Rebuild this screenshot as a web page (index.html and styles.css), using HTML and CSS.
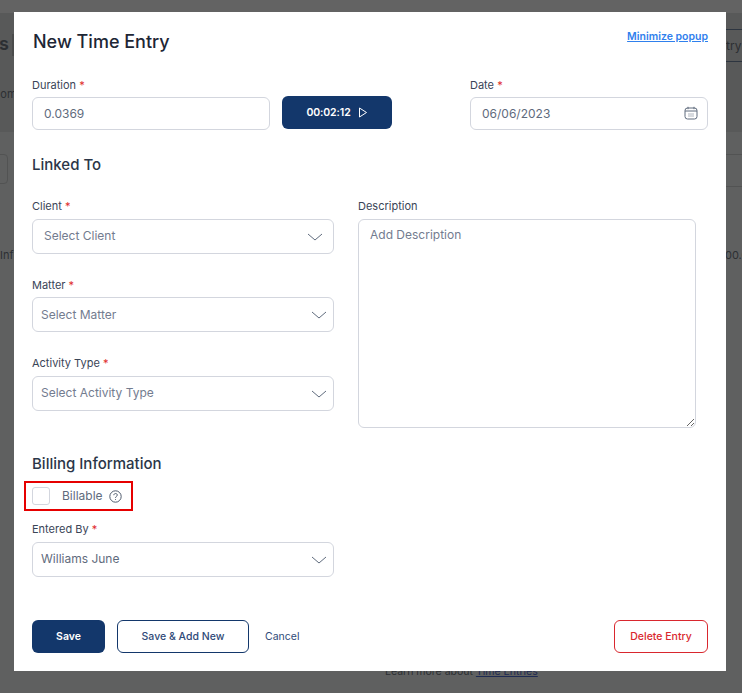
FILE: index.html
```html
<!DOCTYPE html>
<html lang="en">
<head>
    <meta charset="UTF-8">
    <meta name="viewport" content="width=device-width, initial-scale=1.0">
    <title>New Time Entry</title>
    <link rel="stylesheet" href="styles.css">
</head>
<body>
    <!-- page behind the popup, dimmed -->
    <div class="behind">
        <span class="behind-top"></span>
        <span class="behind-band"></span>
        <span class="behind-title">s</span>
        <span class="behind-bar"></span>
        <span class="behind-com">com</span>
        <span class="behind-inf">Inf</span>
        <span class="behind-num">00.0</span>
        <span class="behind-btn">try</span>
        <span class="behind-rule behind-rule-a"></span>
        <span class="behind-rule behind-rule-b"></span>
        <span class="behind-box"></span>
        <span class="behind-learn">Learn more about <u>Time Entries</u></span>
    </div>

    <div class="modal">
        <div class="modal-head">
            <h1>New Time Entry</h1>
            <a class="minimize" href="#">Minimize popup</a>
        </div>

        <div class="duration-row">
            <div class="field duration-field">
                <label>Duration <span class="req">*</span></label>
                <input type="text" class="input" value="0.0369">
            </div>
            <button class="timer">
                00:02:12
                <svg width="10" height="11" viewBox="0 0 10 11" fill="none" stroke="#fff" stroke-width="1"><path d="M1.5 1v9l7-4.500z"/></svg>
            </button>
            <div class="field date-field">
                <label>Date <span class="req">*</span></label>
                <div class="date-input">
                    <input type="text" class="input" value="06/06/2023">
                    <svg class="cal" width="14" height="14" viewBox="0 0 14 14" fill="none" stroke="#5f6b7d" stroke-width="1"><rect x="1" y="2" width="12" height="11" rx="2.500"/><path d="M1 5h12M4 .8v2.400M10 .8v2.400"/><path d="M4.500 8h1M6.500 8h1M8.500 8h1M4.500 10h1M6.500 10h1M8.500 10h1"/></svg>
                </div>
            </div>
        </div>

        <h2 class="linked-title">Linked To</h2>

        <div class="linked">
            <div class="linked-left">
                <div class="field">
                    <label>Client <span class="req">*</span></label>
                    <div class="select select-client">
                        <span class="placeholder">Select Client</span>
                        <svg width="16" height="8" viewBox="0 0 16 8" fill="none" stroke="#5f6b7d" stroke-width="1"><path d="M1 1l7 6 7-6"/></svg>
                    </div>
                </div>
                <div class="field field-matter">
                    <label>Matter <span class="req">*</span></label>
                    <div class="select">
                        <span class="placeholder">Select Matter</span>
                        <svg width="16" height="8" viewBox="0 0 16 8" fill="none" stroke="#5f6b7d" stroke-width="1"><path d="M1 1l7 6 7-6"/></svg>
                    </div>
                </div>
                <div class="field field-activity">
                    <label>Activity Type <span class="req">*</span></label>
                    <div class="select">
                        <span class="placeholder">Select Activity Type</span>
                        <svg width="16" height="8" viewBox="0 0 16 8" fill="none" stroke="#5f6b7d" stroke-width="1"><path d="M1 1l7 6 7-6"/></svg>
                    </div>
                </div>
            </div>
            <div class="field desc-field">
                <label>Description</label>
                <textarea class="desc" placeholder="Add Description"></textarea>
            </div>
        </div>

        <h2 class="billing-title">Billing Information</h2>
        <div class="billable">
            <span class="check"></span>
            <span class="billable-text">Billable</span>
            <svg width="13" height="13" viewBox="0 0 13 13" fill="none" stroke="#4f5b6d" stroke-width="1"><circle cx="6.500" cy="6.500" r="5.700"/><path d="M4.800 5.200c0-2.200 3.500-2.200 3.500-.1 0 1.300-1.800 1.300-1.800 2.700M6.500 9.200v.8"/></svg>
        </div>

        <div class="field field-entered">
            <label>Entered By <span class="req">*</span></label>
            <div class="select">
                <span class="value">Williams June</span>
                <svg width="16" height="8" viewBox="0 0 16 8" fill="none" stroke="#5f6b7d" stroke-width="1"><path d="M1 1l7 6 7-6"/></svg>
            </div>
        </div>

        <div class="footer">
            <button class="btn btn-save">Save</button>
            <button class="btn btn-add">Save &amp; Add New</button>
            <button class="btn btn-cancel">Cancel</button>
            <button class="btn btn-delete">Delete Entry</button>
        </div>
    </div>
</body>
</html>
```

FILE: styles.css
```css
* {
    box-sizing: border-box;
}
html, body {
    height: 100%;
}
body {
    margin: 0;
    overflow: hidden;
    background-color: #5f6060;
    font-family: Inter, "Liberation Sans", sans-serif;
    color: #2b3648;
    position: relative;
}

/* dimmed page */
.behind {
    position: absolute;
    inset: 0;
    color: #2c2f33;
    font-size: 11px;
}
.behind span {
    position: absolute;
}
.behind .behind-top {
    left: 0;
    top: 0;
    width: 742px;
    height: 13px;
    background-color: #636363;
}
.behind .behind-band {
    left: 0;
    top: 13px;
    width: 742px;
    height: 119px;
    background-color: #585959;
}
.behind-title {
    left: -1px;
    top: 33px;
    font-size: 18px;
    font-weight: 600;
}
.behind-bar {
    left: 12px;
    top: 34px;
    width: 2px;
    height: 22px;
    background-color: #4a4b4b;
}
.behind-com {
    left: -6px;
    top: 87px;
}
.behind-inf {
    left: 0;
    top: 248px;
}
.behind-num {
    left: 725px;
    top: 248px;
}
.behind-btn {
    left: 726px;
    top: 29px;
    width: 30px;
    height: 33px;
    padding-top: 8px;
    font-size: 12px;
    border-top: 1px solid #2d3540;
    border-bottom: 1px solid #2d3540;
}
.behind-rule {
    left: 726px;
    width: 16px;
    height: 1px;
    background-color: #525353;
}
.behind-rule-a {
    top: 154px;
}
.behind-rule-b {
    top: 186px;
}
.behind-box {
    left: -6px;
    top: 154px;
    width: 14px;
    height: 30px;
    border: 1px solid #525353;
    border-radius: 4px;
}
.behind-learn {
    left: 385px;
    top: 665px;
    font-size: 10.500px;
}
.behind-learn u {
    color: #1e2a52;
}

/* popup */
.modal {
    position: absolute;
    left: 14px;
    top: 12px;
    width: 712px;
    height: 659px;
    background-color: #fff;
    padding: 18px 18px 0 18px;
}
.modal-head {
    display: flex;
    justify-content: space-between;
    align-items: flex-start;
    height: 45px;
}
h1 {
    margin: 0 0 0 1px;
    font-size: 18px;
    line-height: 24px;
    font-weight: 500;
    color: #1d2635;
}
.minimize {
    font-size: 10.500px;
    line-height: 14px;
    font-weight: 600;
    color: #2f80ed;
}
h2 {
    margin: 0;
    font-size: 15px;
    line-height: 18px;
    font-weight: 500;
    color: #2b3648;
}
label {
    display: block;
    font-size: 11px;
    line-height: 14px;
    font-weight: 400;
    color: #3a4557;
}
.req {
    color: #e02b2b;
}
.input {
    display: block;
    width: 100%;
    height: 33px;
    margin-top: 5px;
    padding: 0 11px;
    border: 1px solid #d3d6de;
    border-radius: 6px;
    font-family: inherit;
    font-size: 12px;
    color: #5f6b7d;
    outline: none;
}

.duration-row {
    display: flex;
    align-items: flex-start;
    height: 78px;
    margin-top: 3px;
}
.duration-field {
    width: 238px;
    flex: none;
}
.timer {
    flex: none;
    display: flex;
    align-items: center;
    justify-content: center;
    gap: 7px;
    width: 110px;
    height: 33px;
    margin: 18px 0 0 12px;
    padding: 0;
    border: none;
    border-radius: 6px;
    background-color: #13376b;
    color: #fff;
    font-family: inherit;
    font-size: 10.500px;
    letter-spacing: -0.1px;
    font-weight: 600;
}
.date-field {
    flex: none;
    width: 238px;
    margin-left: 78px;
}
.date-input {
    position: relative;
}
.cal {
    position: absolute;
    right: 10px;
    top: 9px;
}

.linked {
    display: flex;
    margin-top: 25px;
}
.linked-left {
    width: 302px;
    flex: none;
}
.select {
    display: flex;
    align-items: center;
    justify-content: space-between;
    height: 35px;
    margin-top: 5px;
    padding: 0 6px 0 8px;
    border: 1px solid #d3d6de;
    border-radius: 6px;
    font-size: 12px;
}
.select span {
    margin-bottom: 2px;
}
.select-client {
    margin-top: 6px;
    padding: 0 10px 0 11px;
}
.placeholder {
    color: #737c8f;
}
.value {
    color: #5f6b7d;
}
.field-matter {
    margin-top: 24px;
}
.field-matter .select span {
    margin-bottom: 0;
}
.field-activity {
    margin-top: 24px;
}
.field-activity .select {
    margin-top: 6px;
}
.desc-field {
    width: 338px;
    margin-left: 24px;
}
.desc {
    display: block;
    width: 100%;
    height: 209px;
    margin-top: 6px;
    padding: 7px 11px;
    border: 1px solid #d3d6de;
    border-radius: 6px;
    font-family: inherit;
    font-size: 12px;
    outline: none;
}
.desc::placeholder {
    color: #737c8f;
}

.billing-title {
    margin-top: 27px;
}
.billable {
    display: flex;
    align-items: center;
    width: 109px;
    height: 30px;
    margin: 8px 0 0 -8px;
    padding-left: 6px;
    border: 2px solid #e60000;
    font-size: 12px;
    color: #5f6b7d;
}
.check {
    width: 18px;
    height: 18px;
    border: 1px solid #d3d6de;
    border-radius: 3px;
}
.billable-text {
    margin: 0 6px 2px 12px;
}
.field-entered {
    margin-top: 11px;
    width: 302px;
}
.field-entered .select {
    margin-top: 6px;
}

.footer {
    display: flex;
    align-items: center;
    margin-top: 43px;
}
.btn {
    height: 33px;
    padding: 0;
    border-radius: 6px;
    border: 1px solid transparent;
    background: none;
    font-family: inherit;
    font-size: 10.500px;
    font-weight: 500;
}
.btn-save {
    width: 73px;
    background-color: #13376b;
    color: #fff;
    font-weight: 600;
}
.btn-add {
    width: 132px;
    margin-left: 12px;
    border-color: #13376b;
    color: #2f4a78;
}
.btn-cancel {
    margin-left: 15px;
    font-weight: 400;
    color: #2f4a78;
}
.btn-delete {
    width: 94px;
    margin-left: auto;
    border-color: #d9272e;
    color: #d9272e;
}
```
